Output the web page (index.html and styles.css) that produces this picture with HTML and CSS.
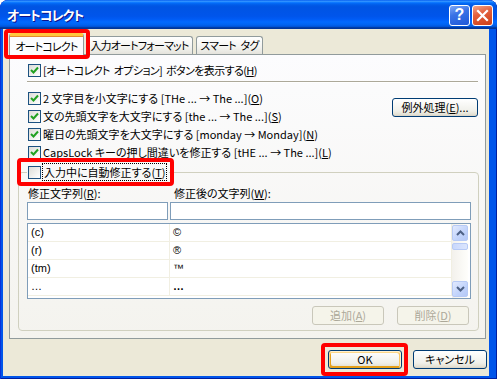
FILE: index.html
```html
<!DOCTYPE html>
<html lang="ja">

<head>
    <meta charset="UTF-8">
    <title>オートコレクト</title>
    <link rel="stylesheet" href="styles.css">
</head>

<body>
    <div class="window">
        <!-- Title Bar -->
        <div class="titlebar">
            <span class="title">オートコレクト</span>
            <div class="ctrls">
                <div class="tbtn help">?</div>
                <div class="tbtn close">
                    <svg width="19" height="19" viewBox="0 0 19 19">
                        <path d="M5 5 L14 14 M14 5 L5 14" stroke="#fff" stroke-width="2.2" stroke-linecap="square" />
                    </svg>
                </div>
            </div>
        </div>

        <div class="client">
            <!-- Tabs -->
            <div class="tabs">
                <div class="tab active mark mark-tab">オートコレクト</div>
                <div class="tab tab-fmt">入力オートフォーマット</div>
                <div class="tab tab-tag">スマート タグ</div>
            </div>

            <div class="panel">
                <div class="check row1">
                    <span class="box on"><svg width="11" height="11" viewBox="0 0 11 11"><path d="M2 5 L4.5 7.5 L9 2.5" stroke="#21a121" stroke-width="2" fill="none" /></svg></span>
                    <span class="tight">[オートコレクト オプション] ボタンを表示する(<u>H</u>)</span>
                </div>
                <div class="sep"></div>

                <div class="options">
                    <div class="opt-list">
                        <div class="check">
                            <span class="box on"><svg width="11" height="11" viewBox="0 0 11 11"><path d="M2 5 L4.5 7.5 L9 2.5" stroke="#21a121" stroke-width="2" fill="none" /></svg></span>
                            <span>2 文字目を小文字にする [THe ... → The ...](<u>O</u>)</span>
                        </div>
                        <div class="check">
                            <span class="box on"><svg width="11" height="11" viewBox="0 0 11 11"><path d="M2 5 L4.5 7.5 L9 2.5" stroke="#21a121" stroke-width="2" fill="none" /></svg></span>
                            <span>文の先頭文字を大文字にする [the ... → The ...](<u>S</u>)</span>
                        </div>
                        <div class="check">
                            <span class="box on"><svg width="11" height="11" viewBox="0 0 11 11"><path d="M2 5 L4.5 7.5 L9 2.5" stroke="#21a121" stroke-width="2" fill="none" /></svg></span>
                            <span>曜日の先頭文字を大文字にする [monday → Monday](<u>N</u>)</span>
                        </div>
                        <div class="check">
                            <span class="box on"><svg width="11" height="11" viewBox="0 0 11 11"><path d="M2 5 L4.5 7.5 L9 2.5" stroke="#21a121" stroke-width="2" fill="none" /></svg></span>
                            <span>CapsLock キーの押し間違いを修正する [tHE ... → The ...](<u>L</u>)</span>
                        </div>
                    </div>
                    <button class="btn btn-exc">例外処理(<u>E</u>)...</button>
                </div>

                <!-- Replace group -->
                <fieldset class="group">
                    <legend class="check mark mark-legend">
                        <span class="box"></span>
                        <span class="focus">入力中に自動修正する(<u>T</u>)</span>
                    </legend>

                    <div class="fields">
                        <label class="lbl-from">修正文字列(<u>R</u>):</label>
                        <label class="lbl-to">修正後の文字列(<u>W</u>):</label>
                        <div class="input"></div>
                        <div class="input"></div>
                    </div>

                    <div class="list">
                        <table>
                            <tr><td>(c)</td><td>©</td></tr>
                            <tr><td>(r)</td><td>®</td></tr>
                            <tr><td>(tm)</td><td>™</td></tr>
                            <tr><td>…</td><td class="dots">…</td></tr>
                        </table>
                        <div class="scroll">
                            <div class="sbtn">
                                <svg width="9" height="6" viewBox="0 0 9 6"><path d="M1 5 L4.5 1.5 L8 5" stroke="#4d6185" stroke-width="2" fill="none" /></svg>
                            </div>
                            <div class="thumb"></div>
                            <div class="track"></div>
                            <div class="sbtn">
                                <svg width="9" height="6" viewBox="0 0 9 6"><path d="M1 1 L4.5 4.5 L8 1" stroke="#4d6185" stroke-width="2" fill="none" /></svg>
                            </div>
                        </div>
                    </div>

                    <div class="group-btns">
                        <button class="btn" disabled>追加(<u>A</u>)</button>
                        <button class="btn" disabled>削除(<u>D</u>)</button>
                    </div>
                </fieldset>
            </div>

            <!-- Dialog buttons -->
            <div class="footer">
                <button class="btn default mark mark-ok">OK</button>
                <button class="btn">キャンセル</button>
            </div>
        </div>
    </div>
</body>

</html>
```

FILE: styles.css
```css
/* General Body Styling */
body {
    margin: 0;
    background: #fff;
    font-family: "Noto Sans CJK JP", "Liberation Sans", sans-serif;
    font-size: 11px;
    font-feature-settings: "palt";
    color: #000;
}

.window {
    width: 497px;
    height: 379px;
    display: flex;
    flex-direction: column;
    background: #0055ea;
    border-radius: 8px 8px 0 0;
    box-shadow: inset 1px 0 #0831d9, inset -1px 0 #001ea0, inset 0 -1px #001ea0;
    overflow: hidden;
}

/* Title Bar */
.titlebar {
    height: 29px;
    flex: none;
    display: flex;
    align-items: center;
    padding: 0 4px 0 7px;
    background: linear-gradient(180deg, #0058ee 0%, #3593ff 4%, #288eff 6%, #127dff 8%, #036ffc 10%,
            #0262ee 14%, #0057e5 20%, #0054e3 24%, #0055eb 56%, #005bf5 66%, #026afe 76%,
            #0062ef 86%, #0052d6 92%, #0040ab 94%, #003092 100%);
    border-radius: 8px 8px 0 0;
}

.title {
    flex: 1;
    color: #fff;
    font-size: 13px;
    font-weight: bold;
    letter-spacing: -1px;
    text-shadow: 1px 1px #0f1089;
    margin-top: -1px;
}

.ctrls {
    display: flex;
    gap: 2px;
    margin-top: 1px;
}

.tbtn {
    width: 21px;
    height: 21px;
    box-sizing: border-box;
    border: 1px solid #fff;
    border-radius: 3px;
    display: flex;
    align-items: center;
    justify-content: center;
    color: #fff;
}

.tbtn.help {
    background: linear-gradient(160deg, #7fa8f6 0%, #3a73e6 40%, #1f58d8 100%);
    font-family: "Liberation Sans", sans-serif;
    font-weight: bold;
    font-size: 16px;
}

.tbtn.close {
    background: linear-gradient(160deg, #f3a58a 0%, #e3603c 40%, #cc3f17 100%);
}

/* Client area */
.client {
    flex: 1;
    display: flex;
    flex-direction: column;
    background: #ece9d8;
    margin: 0 8px 3px 3px;
    padding: 4px 3px 0 6px;
}

/* Tabs */
.tabs {
    display: flex;
    align-items: flex-end;
    height: 21px;
    position: relative;
    z-index: 1;
}

.tab {
    height: 18px;
    box-sizing: border-box;
    border: 1px solid #919b9c;
    border-bottom: none;
    border-radius: 3px 3px 0 0;
    background: linear-gradient(180deg, #fff 0%, #f3f3ef 60%, #e4e3dc 100%);
    display: flex;
    align-items: center;
    justify-content: center;
    line-height: 1;
    white-space: nowrap;
    letter-spacing: -0.8px;
    word-spacing: 3px;
}

.tab.active {
    width: 75px;
    height: 22px;
    margin-bottom: -1px;
    background: #fcfcfe;
    border-top: 3px solid #ffc83c;
    box-shadow: inset 0 1px #e68b2c;
    padding-top: 1px;
}

.tab-fmt {
    width: 107px;
    margin-left: 2px;
}

.tab-tag {
    width: 67px;
    margin-left: 3px;
}

/* Panel */
.panel {
    flex: none;
    height: 285px;
    box-sizing: border-box;
    border: 1px solid #919b9c;
    background: linear-gradient(180deg, #fcfcfe 0%, #f4f3ee 100%);
    padding: 6px 7px 0 8px;
}

.check {
    display: flex;
    align-items: center;
    height: 18px;
    white-space: nowrap;
}

.check .box {
    width: 13px;
    height: 13px;
    box-sizing: border-box;
    border: 1px solid #1c5180;
    background: linear-gradient(135deg, #dcdcd7 0%, #fff 100%);
    margin-right: 2px;
    display: flex;
    align-items: center;
    justify-content: center;
    flex: none;
}

.row1,
.opt-list .check {
    padding-left: 10px;
}

.tight {
    letter-spacing: -0.6px;
    word-spacing: 2px;
}

.sep {
    margin: 2px 0 6px 9px;
    height: 0;
    border-top: 1px solid #aca899;
    border-bottom: 1px solid #fff;
}

.options {
    display: flex;
    justify-content: space-between;
    align-items: flex-start;
}

/* Buttons */
.btn {
    font-family: inherit;
    font-size: 11px;
    font-feature-settings: "palt";
    height: 19px;
    box-sizing: border-box;
    padding: 0;
    border: 1px solid #003c74;
    border-radius: 3px;
    background: linear-gradient(180deg, #fff 0%, #f0f0ea 70%, #e3e0d3 92%, #d6d0c5 100%);
    color: #000;
    line-height: 15px;
}

.btn-exc {
    width: 86px;
    margin-top: 9px;
}

.btn:disabled {
    border-color: #c9c7ba;
    background: #f5f4ea;
    color: #aca899;
}

.btn.default {
    box-shadow: inset -1px 1px #fff0cf, inset 1px 2px #fdd889, inset -2px 2px #fbc761, inset 2px -2px #e5a01a;
}

/* Group box */
.group {
    margin: 2px 0 0 0;
    width: 461px;
    box-sizing: border-box;
    border: 1px solid #d0d0bf;
    border-radius: 4px;
    padding: 0 7px 5px 8px;
}

.group legend {
    padding: 0 3px 0 1px;
}

.focus {
    outline: 1px dotted #000;
    outline-offset: 0;
    padding: 0 1px;
}

.fields {
    display: grid;
    grid-template-columns: 141px 1fr;
    column-gap: 2px;
    margin-top: 5px;
}

.fields label {
    height: 14px;
    line-height: 14px;
    margin-bottom: 2px;
}

.lbl-from {
    padding-left: 1px;
}

.lbl-to {
    padding-left: 4px;
}

.input {
    height: 18px;
    box-sizing: border-box;
    border: 1px solid #7f9db9;
    background: #fff;
}

/* List */
.list {
    margin-top: 3px;
    height: 76px;
    box-sizing: border-box;
    border: 1px solid #7f9db9;
    background: #fff;
    display: flex;
    padding: 0 2px 0 0;
}

.list table {
    flex: 1;
    border-collapse: collapse;
    align-self: flex-start;
}

.list td {
    height: 17px;
    padding: 0 0 0 3px;
    border: 1px solid #f1efe2;
    border-top: none;
    line-height: 17px;
    font-family: "Liberation Sans", sans-serif;
}

.list td:first-child {
    width: 138px;
    border-left: none;
}

.list td.dots {
    font-weight: bold;
}

.scroll {
    width: 16px;
    display: flex;
    flex-direction: column;
    background: linear-gradient(90deg, #f3f1ec, #fefefb);
    padding: 1px 0;
}

.sbtn {
    height: 16px;
    box-sizing: border-box;
    border: 1px solid #b7caf5;
    border-radius: 2px;
    background: linear-gradient(135deg, #e2eafe 0%, #c1d3fb 60%, #b4c8f6 100%);
    display: flex;
    align-items: center;
    justify-content: center;
}

.thumb {
    height: 7px;
    margin-top: 2px;
    box-sizing: border-box;
    border: 1px solid #b7caf5;
    border-radius: 2px;
    background: linear-gradient(90deg, #c9d8fc, #dbe5fd);
}

.track {
    flex: 1;
}

.group-btns {
    display: flex;
    justify-content: flex-end;
    gap: 13px;
    margin: 7px 2px 0 0;
}

.group-btns .btn {
    width: 72px;
}

/* Footer */
.footer {
    display: flex;
    justify-content: flex-end;
    gap: 11px;
    margin: 11px -1px 0 0;
}

.footer .btn {
    width: 74px;
}

/* Red highlight marks */
.mark {
    position: relative;
}

.mark::after {
    content: "";
    position: absolute;
    border: 4px solid #ff0000;
    border-radius: 4px;
    pointer-events: none;
}

.mark-tab::after {
    top: -7px;
    left: -6px;
    right: -7px;
    bottom: -4px;
}

.mark-legend::after {
    top: -5px;
    left: -10px;
    right: -5px;
    bottom: -5px;
}

.mark-ok::after {
    top: -8px;
    left: -8px;
    right: -7px;
    bottom: -8px;
}
```
